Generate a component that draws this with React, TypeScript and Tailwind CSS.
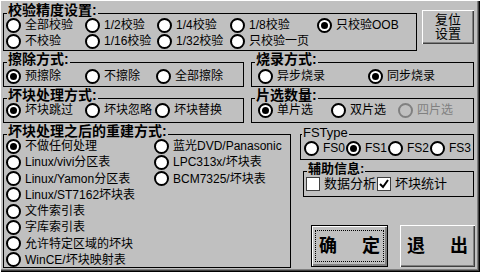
import React from "react";

const BOLD_TITLE = "-top-[11px] left-[3px] text-[14px] font-bold leading-[14px]";

function Radio({ label, checked, disabled }: { label: string; checked?: boolean; disabled?: boolean }) {
  return (
    <div className="flex h-[16px] items-center whitespace-nowrap">
      <span
        className={`flex h-[15px] w-[15px] shrink-0 items-center justify-center rounded-full border-2 ${
          disabled ? "border-[#808080] bg-[#c0c0c0]" : "border-black bg-white"
        }`}
      >
        {checked && <span className="h-[7px] w-[7px] rounded-full bg-black" />}
      </span>
      <span className={`ml-[4px] text-[12px] leading-[16px] ${disabled ? "text-[#808080]" : "text-black"}`}>
        {label}
      </span>
    </div>
  );
}

function Check({ label, checked }: { label: string; checked?: boolean }) {
  return (
    <div className="flex h-[16px] items-center whitespace-nowrap">
      <span className="flex h-[14px] w-[14px] shrink-0 items-center justify-center border border-[#404040] bg-white">
        {checked && (
          <svg width="10" height="10" viewBox="0 0 10 10">
            <polyline points="1,5 4,8 9,1" fill="none" stroke="black" strokeWidth="2" />
          </svg>
        )}
      </span>
      <span className="ml-[4px] text-[13px] leading-[16px] text-black">{label}</span>
    </div>
  );
}

function Group({
  title,
  titleClass,
  className,
  children,
}: {
  title: string;
  titleClass: string;
  className: string;
  children: React.ReactNode;
}) {
  return (
    <div className={`relative border border-black ${className}`}>
      <span className={`absolute whitespace-nowrap bg-[#c0c0c0] px-[1px] text-black ${titleClass}`}>{title}</span>
      {children}
    </div>
  );
}

export default function App() {
  return (
    <div className="flex h-[272px] w-[480px] flex-col overflow-hidden bg-[#c0c0c0] font-['Liberation_Sans','Noto_Sans_CJK_SC',sans-serif] shadow-[inset_1px_1px_0_#fff,inset_-1px_-1px_0_#000,inset_-2px_-2px_0_#404040,inset_-3px_-3px_0_#808080]">
      {/* 校验精度 */}
      <div className="flex items-start">
        <Group title="校验精度设置:" titleClass={BOLD_TITLE} className="ml-[3px] mt-[13px] h-[38px] w-[414px]">
          <div className="grid grid-cols-[79px_72px_73px_87px_auto] pl-[2px] pt-[3px]">
            <Radio label="全部校验" />
            <Radio label="1/2校验" />
            <Radio label="1/4校验" />
            <Radio label="1/8校验" />
            <Radio label="只校验OOB" checked />
            <Radio label="不校验" />
            <Radio label="1/16校验" />
            <Radio label="1/32校验" />
            <Radio label="只校验一页" />
          </div>
        </Group>
        <button className="ml-[5px] mt-[10px] flex h-[34px] w-[52px] flex-col items-center justify-center bg-[#c0c0c0] text-[13px] leading-[14px] text-black shadow-[inset_1px_1px_0_#fff,inset_-1px_-1px_0_#404040,inset_-2px_-2px_0_#808080]">
          <span>复位</span>
          <span>设置</span>
        </button>
      </div>

      {/* 擦除 / 烧录 */}
      <div className="mt-[11px] flex">
        <Group title="擦除方式:" titleClass={BOLD_TITLE} className="ml-[3px] h-[25px] w-[241px]">
          <div className="grid grid-cols-[79px_71px_auto] pl-[2px] pt-[5px]">
            <Radio label="预擦除" checked />
            <Radio label="不擦除" />
            <Radio label="全部擦除" />
          </div>
        </Group>
        <Group title="烧录方式:" titleClass={BOLD_TITLE} className="ml-[7px] h-[25px] w-[223px]">
          <div className="grid grid-cols-[110px_auto] pl-[6px] pt-[5px]">
            <Radio label="异步烧录" />
            <Radio label="同步烧录" checked />
          </div>
        </Group>
      </div>

      {/* 坏块处理 / 片选 */}
      <div className="mt-[11px] flex">
        <Group title="坏块处理方式:" titleClass={BOLD_TITLE} className="ml-[3px] h-[25px] w-[241px]">
          <div className="grid grid-cols-[79px_70px_auto] pl-[2px] pt-[3px]">
            <Radio label="坏块跳过" checked />
            <Radio label="坏块忽略" />
            <Radio label="坏块替换" />
          </div>
        </Group>
        <Group title="片选数量:" titleClass={BOLD_TITLE} className="ml-[7px] h-[25px] w-[223px]">
          <div className="grid grid-cols-[73px_67px_auto] pl-[6px] pt-[3px]">
            <Radio label="单片选" checked />
            <Radio label="双片选" />
            <Radio label="四片选" disabled />
          </div>
        </Group>
      </div>

      {/* 重建方式 + 右侧 */}
      <div className="mt-[11px] flex items-start">
        <Group title="坏块处理之后的重建方式:" titleClass={BOLD_TITLE} className="ml-[3px] h-[134px] w-[288px]">
          <div className="flex pl-[2px] pt-[3px]">
            <div className="grid w-[148px] auto-rows-[16.25px]">
              <Radio label="不做任何处理" checked />
              <Radio label="Linux/vivi分区表" />
              <Radio label="Linux/Yamon分区表" />
              <Radio label="Linux/ST7162坏块表" />
              <Radio label="文件索引表" />
              <Radio label="字库索引表" />
              <Radio label="允许特定区域的坏块" />
              <Radio label="WinCE/坏块映射表" />
            </div>
            <div className="grid auto-rows-[16.25px]">
              <Radio label="蓝光DVD/Panasonic" />
              <Radio label="LPC313x/坏块表" />
              <Radio label="BCM7325/坏块表" />
            </div>
          </div>
        </Group>

        <div className="ml-[9px] flex w-[175px] flex-col">
          <Group
            title="FSType"
            titleClass="-top-[9px] left-[1px] text-[13px] leading-[14px]"
            className="h-[26px] w-[174px]"
          >
            <div className="grid grid-cols-[42px_42px_42px_auto] pl-[3px] pt-[5px]">
              <Radio label="FS0" />
              <Radio label="FS1" checked />
              <Radio label="FS2" />
              <Radio label="FS3" />
            </div>
          </Group>
          <Group
            title="辅助信息:"
            titleClass="-top-[10px] left-[3px] text-[13px] font-bold leading-[14px]"
            className="ml-[3px] mt-[11px] h-[26px] w-[171px]"
          >
            <div className="grid grid-cols-[71px_auto] pl-[2px] pt-[4px]">
              <Check label="数据分析" />
              <Check label="坏块统计" checked />
            </div>
          </Group>
          <div className="mt-[28px] flex">
            <button className="ml-[11px] h-[42px] w-[77px] border border-black bg-[#c0c0c0] p-[1px] shadow-[inset_1px_1px_0_#fff,inset_-2px_-2px_0_#808080]">
              <div className="m-[2px] flex h-[32px] items-center justify-between border border-dotted border-black px-[3px] text-[18px] font-bold text-black">
                <span>确</span>
                <span>定</span>
              </div>
            </button>
            <button className="ml-[12px] flex h-[42px] w-[75px] items-center justify-between bg-[#c0c0c0] px-[7px] text-[18px] font-bold text-black shadow-[inset_1px_1px_0_#fff,inset_-1px_-1px_0_#404040,inset_-2px_-2px_0_#808080]">
              <span>退</span>
              <span>出</span>
            </button>
          </div>
        </div>
      </div>
    </div>
  );
}
